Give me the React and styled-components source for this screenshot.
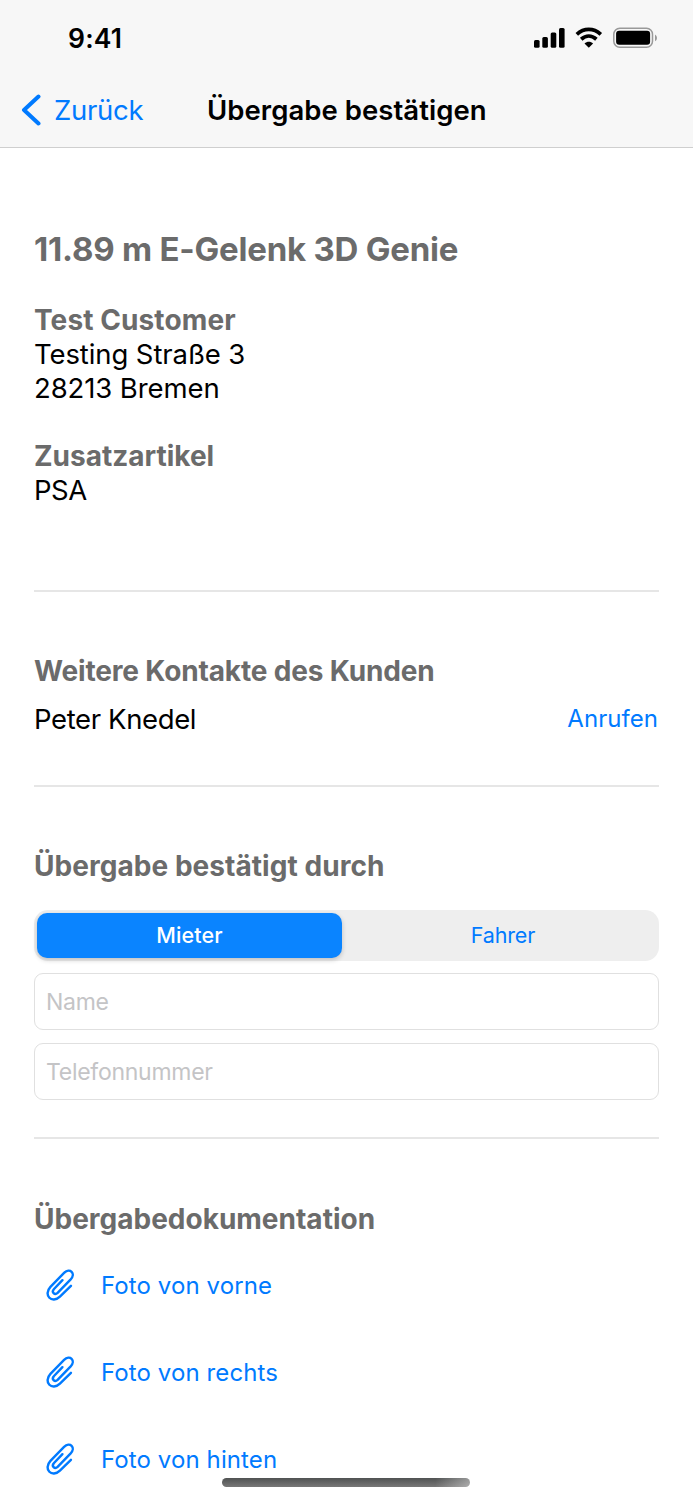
import React from "react";
import styled, { createGlobalStyle } from 'styled-components'

const GlobalStyle = createGlobalStyle`
  * {
    box-sizing: border-box;
  }

  body {
    margin: 0;
    background: #fff;
    font-family: Inter, "Liberation Sans", sans-serif;
    overflow: hidden;
  }
`

const Screen = styled.div`
  position: relative;
  width: 693px;
  height: 1500px;
  overflow: hidden;
  background: #fff;
  color: #000;
`

const Header = styled.header`
  height: 148px;
  background: #f7f7f7;
  border-bottom: 1px solid #cfcfcf;
`

const StatusBar = styled.div`
  display: flex;
  align-items: center;
  justify-content: space-between;
  height: 76px;
  padding: 0 35px 0 68px;
`

const Time = styled.span`
  font-size: 26.5px;
  font-weight: 600;
  line-height: 32px;
  letter-spacing: 0.2px;
`

const StatusIcons = styled.svg`
  display: block;
  width: 126px;
  height: 24px;
`

const NavBar = styled.nav`
  display: grid;
  grid-template-columns: 207px auto 1fr;
  align-items: center;
  height: 68px;
`

const BackButton = styled.button`
  display: flex;
  align-items: center;
  gap: 13px;
  padding: 0 0 0 21px;
  border: 0;
  background: none;
  color: #007aff;
  font: inherit;
  font-size: 27.5px;
  line-height: 34px;
  letter-spacing: -0.3px;

  svg {
    display: block;
  }
`

const NavTitle = styled.h1`
  margin: 0;
  font-size: 27.5px;
  font-weight: 600;
  line-height: 34px;
  letter-spacing: 0.05px;
  white-space: nowrap;
`

const Content = styled.main`
  padding: 0 34px;
`

const Section = styled.section`
  height: ${props => props.$height}px;
  padding-top: ${props => props.$top}px;
  border-bottom: ${props => (props.$last ? '0' : '2px solid #e6e6e6')};
`

const MachineName = styled.h2`
  margin: 0 0 32px;
  color: #6b6b6b;
  font-size: 33px;
  font-weight: 700;
  line-height: 44px;
  letter-spacing: -0.22px;
  white-space: nowrap;
`

const Heading = styled.h3`
  margin: 0;
  color: #6b6b6b;
  font-size: 28px;
  font-weight: 700;
  line-height: 34px;
  letter-spacing: ${props => props.$spacing || 0}px;
  white-space: nowrap;
`

const Line = styled.p`
  margin: 0;
  font-size: 27.5px;
  line-height: 34px;
  letter-spacing: ${props => props.$spacing || -0.1}px;
`

const Block = styled.div`
  margin-bottom: 34px;
`

const ContactRow = styled.div`
  display: flex;
  align-items: center;
  justify-content: space-between;
  margin-top: 14px;
`

const CallLink = styled.a`
  padding-right: 1px;
  color: #007aff;
  font-size: 24px;
  line-height: 34px;
  letter-spacing: 0.05px;
`

const Segmented = styled.div`
  display: grid;
  grid-template-columns: 305px 1fr;
  column-gap: 5px;
  height: 51px;
  margin-top: 27px;
  padding: 3px 0 3px 3px;
  border-radius: 14px;
  background: #eee;
`

const Segment = styled.button`
  padding: 0 0 1px;
  border: 0;
  border-radius: 10px;
  background: ${props => (props.$active ? '#0a84ff' : 'transparent')};
  box-shadow: ${props => (props.$active ? '0 2px 5px rgba(0, 0, 0, 0.2)' : 'none')};
  color: ${props => (props.$active ? '#fff' : '#007aff')};
  font: inherit;
  font-size: 21.5px;
  font-weight: ${props => (props.$active ? 500 : 400)};
  letter-spacing: ${props => (props.$active ? 0.15 : -0.15)}px;
`

const Field = styled.input`
  display: block;
  width: 100%;
  height: 57px;
  margin-top: ${props => props.$gap}px;
  padding: 0 11px;
  border: 1px solid #e0e0e0;
  border-radius: 9px;
  outline: 0;
  background: #fff;
  font: inherit;
  font-size: 23px;
  letter-spacing: -0.27px;

  &::placeholder {
    color: #c4c4c6;
    opacity: 1;
  }
`

const PhotoList = styled.ul`
  margin: 6px 0 0;
  padding: 0;
  list-style: none;
`

const PhotoItem = styled.li`
  display: flex;
  align-items: center;
  gap: 26px;
  height: 87px;
  padding-left: 12px;
  color: #007aff;
  font-size: 24px;
  letter-spacing: 0.1px;
`

const HomeIndicator = styled.div`
  position: absolute;
  left: 222px;
  top: 1478px;
  width: 248px;
  height: 9px;
  border-radius: 5px;
  background:
    linear-gradient(to right, rgba(255, 255, 255, 0) 86%, rgba(255, 255, 255, 0.4)),
    linear-gradient(#505252, #777);
`

const photos = ['Foto von vorne', 'Foto von rechts', 'Foto von hinten']

const PaperClip = () => (
  <svg width="29" height="33" viewBox="0 0 30 34" fill="none" stroke="currentColor" strokeWidth="2.5" strokeLinecap="round" strokeLinejoin="round">
    <path d="M17 11.5 L8.3 20.6 C5.2 24 9 27.5 12 24.7 L25.3 11 C31.5 4.300 24.5 -1.700 18.700 4 L4.600 18.400 C-3.300 27 6.200 36.500 14.400 28.500 L25.800 17.300" />
  </svg>
)

const Status = () => (
  <StatusIcons viewBox="0 0 126 24">
    <rect x="2" y="14" width="5.600" height="7.700" rx="1.500" />
    <rect x="10.300" y="11" width="5.600" height="10.700" rx="1.500" />
    <rect x="18.700" y="6.500" width="5.600" height="15.200" rx="1.500" />
    <rect x="27" y="2" width="5.600" height="19.700" rx="1.500" />
    <g fill="none" stroke="#000" strokeWidth="3.800">
      <path d="M44.800 8.300 C52 1.800 61.500 1.800 68.800 8.300" />
      <path d="M49.200 13.200 C54 9 59.600 9 64.400 13.200" />
    </g>
    <path d="M56.800 21.800 L52.500 17.500 C55 15.100 58.600 15.100 61.100 17.500 Z" />
    <rect x="81.800" y="2.300" width="38.700" height="19" rx="6" fill="none" stroke="#999" strokeWidth="1.500" />
    <rect x="84.100" y="4.800" width="34" height="14" rx="3" />
    <path d="M123 8.500 Q125 9.500 125 12 Q125 14.500 123 15.300 Z" fill="#999" />
  </StatusIcons>
)

class App extends React.Component {

  render() {
    return (
      <React.Fragment>
        <GlobalStyle />
        <Screen>
          <Header>
            <StatusBar>
              <Time>9:41</Time>
              <Status />
            </StatusBar>
            <NavBar>
              <BackButton>
                <svg width="20" height="32" viewBox="0 0 20 32" fill="none" stroke="currentColor" strokeWidth="4" strokeLinecap="round" strokeLinejoin="round">
                  <path d="M17.500 2.500 L3 16 L17.500 29.500" />
                </svg>
                Zurück
              </BackButton>
              <NavTitle>Übergabe bestätigen</NavTitle>
            </NavBar>
          </Header>

          <Content>
            <Section $height={444} $top={79}>
              <MachineName>11.89 m E-Gelenk 3D Genie</MachineName>
              <Block>
                <Heading $spacing={0.1}>Test Customer</Heading>
                <Line>Testing Straße 3</Line>
                <Line>28213 Bremen</Line>
              </Block>
              <Heading>Zusatzartikel</Heading>
              <Line $spacing={-0.5}>PSA</Line>
            </Section>

            <Section $height={195} $top={62}>
              <Heading $spacing={-0.16}>Weitere Kontakte des Kunden</Heading>
              <ContactRow>
                <Line $spacing={-0.37}>Peter Knedel</Line>
                <CallLink>Anrufen</CallLink>
              </ContactRow>
            </Section>

            <Section $height={352} $top={62}>
              <Heading $spacing={0.05}>Übergabe bestätigt durch</Heading>
              <Segmented>
                <Segment $active>Mieter</Segment>
                <Segment>Fahrer</Segment>
              </Segmented>
              <Field $gap={12} placeholder="Name" />
              <Field $gap={13} placeholder="Telefonnummer" />
            </Section>

            <Section $last $height={361} $top={63}>
              <Heading>Übergabedokumentation</Heading>
              <PhotoList>
                {photos.map(photo => (
                  <PhotoItem key={photo}>
                    <PaperClip />
                    {photo}
                  </PhotoItem>
                ))}
              </PhotoList>
            </Section>
          </Content>
          <HomeIndicator />
        </Screen>
      </React.Fragment>
    )
  }
}

export default App
